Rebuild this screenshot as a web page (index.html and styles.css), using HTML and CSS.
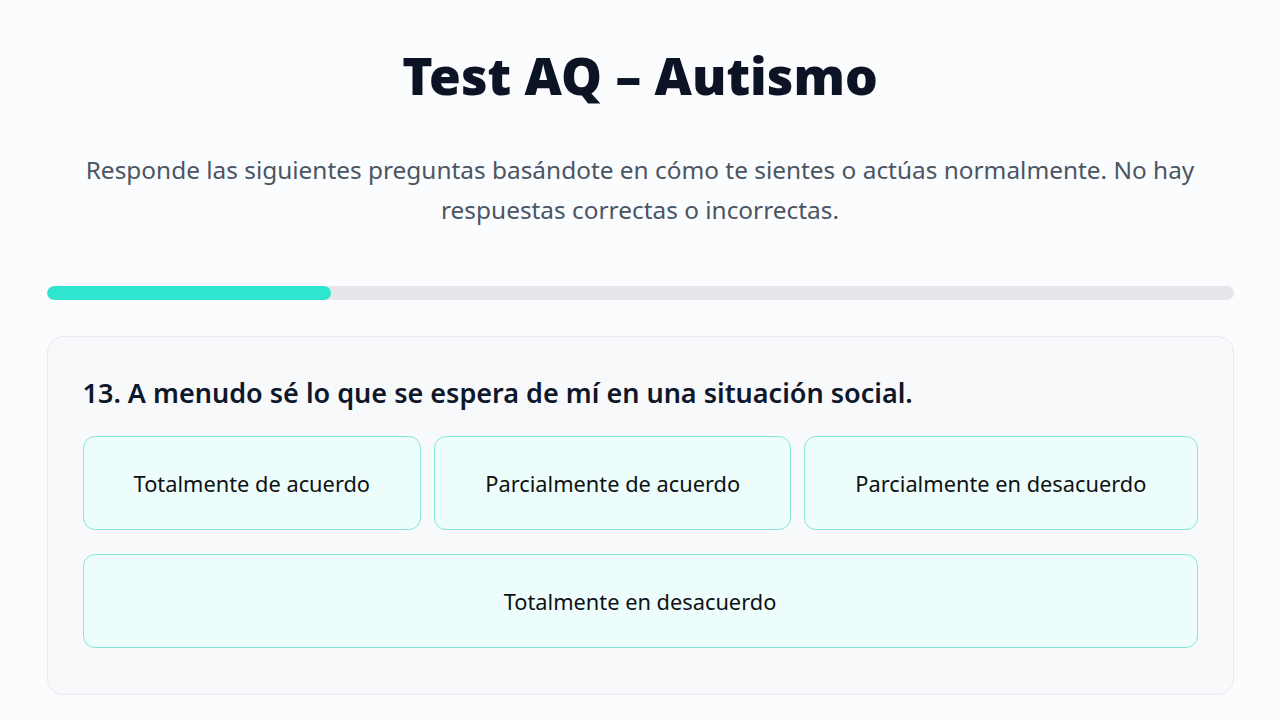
FILE: index.html
```html
<!DOCTYPE html>
<html lang="es">
<head>
<meta charset="utf-8">
<title>Test AQ – Autismo</title>
<link rel="stylesheet" href="styles.css">
</head>
<body>
<main class="page">
  <h1 class="title">Test AQ – Autismo</h1>
  <p class="intro">Responde las siguientes preguntas basándote en cómo te sientes o actúas normalmente. No hay respuestas correctas o incorrectas.</p>
  <div class="progress"><div class="progress-fill" style="width: 24%"></div></div>
  <section class="card">
    <h2 class="question">13. A menudo sé lo que se espera de mí en una situación social.</h2>
    <div class="options">
      <button class="option">Totalmente de acuerdo</button>
      <button class="option">Parcialmente de acuerdo</button>
      <button class="option">Parcialmente en desacuerdo</button>
      <button class="option">Totalmente en desacuerdo</button>
    </div>
  </section>
</main>
</body>
</html>
```
FILE: styles.css
```css
* { box-sizing: border-box; }
html, body { margin: 0; padding: 0; }
body {
  background: #fbfcfd;
  font-family: "Noto Sans", "Open Sans", sans-serif;
  color: #111827;
}
.page {
  width: 1187px;
  margin: 0 auto;
  padding-top: 42px;
}
.title {
  margin: 0;
  text-align: center;
  font-size: 51.5px;
  font-weight: 900;
  line-height: 66px;
  color: #0b1324;
}
.intro {
  margin: 42px auto 0;
  max-width: 1150px;
  text-align: center;
  font-size: 24.4px;
  line-height: 40px;
  color: #4b5563;
}
.progress {
  margin-top: 56px;
  height: 14px;
  border-radius: 7px;
  background: #e5e7eb;
  overflow: hidden;
}
.progress-fill {
  height: 100%;
  border-radius: 7px;
  background: #2ee6d0;
}
.card {
  margin-top: 36px;
  border: 1px solid #e8eaee;
  border-radius: 16px;
  background: #f8f9fb;
  padding: 38px 35px 46px;
}
.question {
  margin: 0 0 25px;
  font-size: 27px;
  font-weight: 600;
  line-height: 36px;
  color: #0f172a;
}
.options {
  display: flex;
  flex-wrap: wrap;
  column-gap: 13px;
  row-gap: 24px;
}
.option {
  flex: 1 1 auto;
  height: 94px;
  padding: 0 32px;
  border: 1px solid #86e6da;
  border-radius: 12px;
  background: #ecfdfb;
  font-family: inherit;
  font-size: 21.8px;
  color: #111;
  cursor: pointer;
}
```
